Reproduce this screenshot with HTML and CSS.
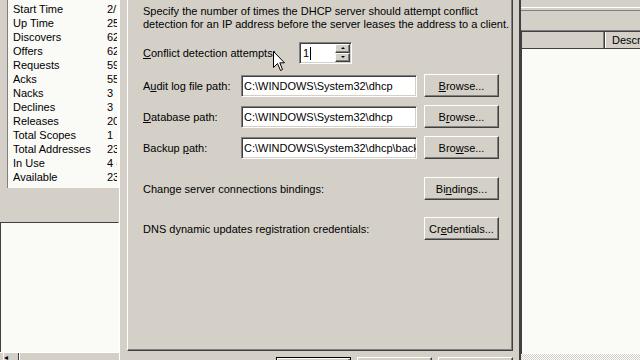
FILE: index.html
```html
<!DOCTYPE html>
<html lang="en">
<head>
    <meta charset="UTF-8">
    <title>DHCP - Server Properties</title>
    <link rel="stylesheet" href="styles.css">
</head>
<body>
    <div class="console-left">
        <div class="stats">
            <div class="stat-row"><span>Start Time</span><span>2/14/2006 10:02 AM</span></div>
            <div class="stat-row"><span>Up Time</span><span>25 Hours, 13 Minutes</span></div>
            <div class="stat-row"><span>Discovers</span><span>62</span></div>
            <div class="stat-row"><span>Offers</span><span>62</span></div>
            <div class="stat-row"><span>Requests</span><span>59</span></div>
            <div class="stat-row"><span>Acks</span><span>55</span></div>
            <div class="stat-row"><span>Nacks</span><span>3</span></div>
            <div class="stat-row"><span>Declines</span><span>3</span></div>
            <div class="stat-row"><span>Releases</span><span>20</span></div>
            <div class="stat-row"><span>Total Scopes</span><span>1</span></div>
            <div class="stat-row"><span>Total Addresses</span><span>234</span></div>
            <div class="stat-row"><span>In Use</span><span>4 (1%)</span></div>
            <div class="stat-row"><span>Available</span><span>230 (99%)</span></div>
        </div>
        <div class="left-gap"></div>
        <div class="left-pane"></div>
        <div class="hscroll"><span class="scroll-btn">&#9666;</span><span class="scroll-track"></span></div>
    </div>

    <div class="dialog">
        <div class="tab-page">
            <p class="intro">
                <span>Specify the number of times the DHCP server should attempt conflict</span>
                <span>detection for an IP address before the server leases the address to a client.</span>
            </p>

            <div class="conflict-row">
                <label><u>C</u>onflict detection attempts:</label>
                <div class="spin">
                    <span class="spin-value">1</span><span class="caret"></span>
                    <div class="spin-btns">
                        <span class="spin-up"></span>
                        <span class="spin-down"></span>
                    </div>
                </div>
            </div>

            <div class="paths">
                <label>A<u>u</u>dit log file path:</label>
                <div class="edit">C:\WINDOWS\System32\dhcp</div>
                <button><u>B</u>rowse...</button>

                <label><u>D</u>atabase path:</label>
                <div class="edit">C:\WINDOWS\System32\dhcp</div>
                <button>B<u>r</u>owse...</button>

                <label>Backup <u>p</u>ath:</label>
                <div class="edit">C:\WINDOWS\System32\dhcp\backup</div>
                <button>Bro<u>w</u>se...</button>
            </div>

            <div class="actions">
                <label>Change server connections bindings:</label>
                <button>Bi<u>n</u>dings...</button>

                <label>DNS dynamic updates registration credentials:</label>
                <button>Cr<u>e</u>dentials...</button>
            </div>
        </div>

        <div class="dialog-buttons">
            <button class="default">OK</button>
            <button>Cancel</button>
            <button>Apply</button>
        </div>
    </div>

    <div class="console-right">
        <div class="r-top"></div>
        <div class="r-bar"></div>
        <div class="r-list">
            <div class="list-head">
                <span class="col-name"></span>
                <span class="col-desc">Description</span>
            </div>
        </div>
        <div class="r-scroll"><span class="scroll-btn"></span></div>
    </div>

    <!-- mouse pointer over the dialog -->
    <svg class="pointer" width="13" height="21" viewBox="0 0 13 21">
        <polygon points="0.5,0.5 0.5,16.5 4.5,12.5 7.5,19.5 9.5,18.5 6.8,11.8 11.5,11.8" fill="#fff" stroke="#000" stroke-width="1"/>
    </svg>
</body>
</html>
```

FILE: styles.css
```css
:root {
    --face: #d4d0c8;      /* 3d face grey */
    --shadow: #808080;
    --dark: #404040;
    --light: #fff;
    --window: #fafaf7;
}

body {
    margin: 0;
    width: 640px;
    height: 360px;
    overflow: hidden;
    display: flex;
    background-color: var(--face);
    font-family: "Liberation Sans", Arial, sans-serif;
    font-size: 11px;
    color: #000;
    position: relative;
}

/* ---------- left console pane ---------- */
.console-left {
    width: 119px;
    flex: none;
    display: flex;
    flex-direction: column;
}

.stats {
    height: 186px;
    margin-left: 7px;
    padding-top: 2px;
    border-left: 1px solid var(--shadow);
    border-right: 1px solid var(--light);
    background-color: var(--window);
    overflow: hidden;
}

.stat-row {
    display: grid;
    grid-template-columns: 94px 10px;
    padding-left: 5px;
    height: 14px;
    line-height: 14px;
    white-space: nowrap;
}

.stat-row span {
    overflow: hidden;
}

.left-gap {
    height: 34px;
}

.left-pane {
    flex: 1;
    background-color: var(--window);
    border-top: 1px solid var(--dark);
    border-left: 1px solid var(--dark);
    border-right: 1px solid var(--light);
}

.hscroll {
    height: 7px;
    display: flex;
    border-top: 1px solid var(--light);
}

.hscroll .scroll-btn {
    width: 14px;
    margin-left: 3px;
    font-size: 8px;
    line-height: 10px;
    border-left: 1px solid var(--light);
    border-right: 1px solid var(--dark);
}

.hscroll .scroll-track {
    flex: 1;
    margin-right: 1px;
    border-left: 1px solid var(--light);
}

/* ---------- property dialog ---------- */
.dialog {
    width: 402px;
    height: 360px;
    flex: none;
    box-sizing: border-box;
    overflow: hidden;
    padding: 0 6px 0 7px;
    border-left: 1px solid var(--light);
    border-right: 2px solid var(--dark);
}

.tab-page {
    height: 351px;
    box-sizing: border-box;
    padding: 5px 0 0 15px;
    border-left: 1px solid var(--light);
    border-right: 1px solid var(--dark);
    border-bottom: 1px solid var(--dark);
    box-shadow: inset -1px -1px var(--shadow);
}

.intro {
    margin: 0;
    display: flex;
    flex-direction: column;
    white-space: nowrap;
}

.intro span {
    height: 13px;
    line-height: 13px;
}

.conflict-row {
    display: flex;
    align-items: center;
    height: 22px;
    margin-top: 11px;
}

.conflict-row label {
    width: 156px;
}

.spin {
    width: 53px;
    height: 22px;
    box-sizing: border-box;
    display: flex;
    align-items: center;
    padding-left: 2px;
    background-color: #fff;
    border: 1px solid;
    border-color: var(--shadow) var(--light) var(--light) var(--shadow);
    box-shadow: inset 1px 1px var(--dark), inset -1px -1px var(--face);
}

.spin-value {
    padding-left: 1px;
}

.caret {
    width: 1px;
    height: 13px;
    margin-left: 1px;
    background-color: #000;
}

.spin-btns {
    margin-left: auto;
    margin-right: 1px;
    width: 15px;
    height: 18px;
    display: flex;
    flex-direction: column;
}

.spin-btns span {
    flex: 1;
    position: relative;
    background-color: var(--face);
    border: 1px solid;
    border-color: var(--light) var(--dark) var(--dark) var(--light);
    box-shadow: inset -1px -1px var(--shadow);
}

.spin-btns span::after {
    content: '';
    position: absolute;
    left: 5px;
    top: 2px;
    border-left: 2px solid transparent;
    border-right: 2px solid transparent;
}

.spin-up::after {
    border-bottom: 2px solid #000;
}

.spin-down::after {
    border-top: 2px solid #000;
}

.paths,
.actions {
    display: grid;
    grid-template-columns: 91px 176px 75px;
    grid-auto-rows: 23px;
    column-gap: 7px;
    row-gap: 8px;
    align-items: center;
    margin-top: 10px;
}

.actions {
    margin-top: 18px;
    row-gap: 17px;
}

.actions label {
    grid-column: 1 / 3;
    white-space: nowrap;
}

.edit {
    height: 22px;
    box-sizing: border-box;
    padding: 0 2px;
    line-height: 20px;
    white-space: nowrap;
    overflow: hidden;
    background-color: #fff;
    border: 1px solid;
    border-color: var(--shadow) var(--light) var(--light) var(--shadow);
    box-shadow: inset 1px 1px var(--dark), inset -1px -1px var(--face);
}

button {
    width: 75px;
    height: 23px;
    padding: 0;
    font: inherit;
    color: #000;
    background-color: var(--face);
    border: 1px solid;
    border-color: var(--light) var(--dark) var(--dark) var(--light);
    box-shadow: inset -1px -1px var(--shadow);
}

.dialog-buttons {
    display: flex;
    justify-content: flex-end;
    gap: 6px;
    margin-top: 6px;
}

button.default {
    border-color: #000;
    box-shadow: inset 1px 1px var(--light), inset -2px -2px var(--shadow);
}

/* ---------- right console pane ---------- */
.console-right {
    flex: 1;
    display: flex;
    flex-direction: column;
}

.r-top {
    height: 7px;
    border-bottom: 1px solid var(--light);
}

.r-bar {
    height: 19px;
    margin-top: 2px;
    border-top: 1px solid var(--shadow);
}

.r-list {
    flex: 1;
    background-color: var(--window);
    border-top: 1px solid var(--shadow);
    border-left: 1px solid var(--dark);
    box-shadow: inset 0 1px var(--dark);
    padding-top: 1px;
    overflow: hidden;
}

.list-head {
    display: flex;
    height: 16px;
    line-height: 16px;
    border-bottom: 1px solid var(--dark);
    background-color: var(--face);
    white-space: nowrap;
}

.col-name {
    width: 82px;
    flex: none;
    border-right: 1px solid var(--dark);
    box-shadow: inset -1px 0 var(--shadow);
}

.col-desc {
    padding-left: 6px;
    border-left: 1px solid var(--light);
}

.r-scroll {
    height: 6px;
    display: flex;
    justify-content: flex-end;
    background: repeating-conic-gradient(var(--face) 0 25%, var(--light) 0 50%) 0 0 / 2px 2px;
}

.r-scroll .scroll-btn {
    width: 14px;
    margin-right: 3px;
    background-color: var(--face);
    border-left: 1px solid var(--light);
    border-top: 1px solid var(--light);
}

.pointer {
    position: absolute;
    left: 273px;
    top: 51px;
}
```
